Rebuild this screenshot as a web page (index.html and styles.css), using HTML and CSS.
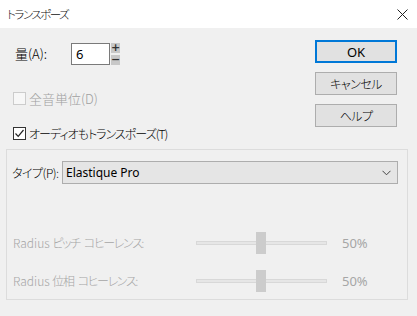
FILE: index.html
```html
<!DOCTYPE html>
<html lang="ja">
<head>
  <meta charset="UTF-8">
  <title>トランスポーズ</title>
  <link rel="stylesheet" href="styles.css">
</head>
<body>
  <div class="titlebar">
    <span class="titulo">トランスポーズ</span>
    <svg class="cerrar" width="11" height="11" viewBox="0 0 11 11">
      <path d="M0.5 0.5 L10.5 10.5 M10.5 0.5 L0.5 10.5" stroke="#222" stroke-width="1"/>
    </svg>
  </div>

  <div class="superior">
    <div class="izquierda">
      <div class="fila-cantidad">
        <span class="etiqueta-cantidad">量(A):</span>
        <div class="entrada">6</div>
        <div class="spinner">
          <span class="spin-btn">+</span>
          <span class="spin-btn">−</span>
        </div>
      </div>
      <div class="check deshabilitado">
        <span class="caja"></span>
        <span>全音単位(D)</span>
      </div>
      <div class="check segundo">
        <span class="caja marcada">
          <svg width="11" height="11" viewBox="0 0 11 11">
            <path d="M1.5 5.5 L4.2 8.3 L9.5 2" fill="none" stroke="#222" stroke-width="1.2"/>
          </svg>
        </span>
        <span class="texto-apretado">オーディオもトランスポーズ(T)</span>
      </div>
    </div>
    <div class="botones">
      <div class="boton principal">OK</div>
      <div class="boton">キャンセル</div>
      <div class="boton">ヘルプ</div>
    </div>
  </div>

  <div class="grupo">
    <div class="fila-tipo">
      <span class="etiqueta-tipo">タイプ(P):</span>
      <div class="selector">
        <span>Elastique Pro</span>
        <svg width="9" height="6" viewBox="0 0 9 6">
          <path d="M0.5 0.8 L4.5 4.8 L8.5 0.8" fill="none" stroke="#444" stroke-width="1"/>
        </svg>
      </div>
    </div>

    <div class="fila-slider primero">
      <span class="etiqueta-slider">Radius <span class="kana">ピッチ コヒーレンス:</span></span>
      <div class="slider">
        <div class="pista"></div>
        <div class="pulgar"></div>
      </div>
      <span class="valor">50%</span>
    </div>
    <div class="fila-slider">
      <span class="etiqueta-slider">Radius <span class="kana">位相 コヒーレンス:</span></span>
      <div class="slider">
        <div class="pista"></div>
        <div class="pulgar"></div>
      </div>
      <span class="valor">50%</span>
    </div>
  </div>
</body>
</html>
```

FILE: styles.css
```css
body {
  margin: 0;
  padding: 0;
  width: 417px;
  height: 316px;
  overflow: hidden;
  background-color: #f0f0f0;
  font-family: "Noto Sans CJK JP", "Noto Sans", sans-serif;
  font-feature-settings: "palt";
  font-weight: 300;
  font-size: 12px;
  line-height: 14px;
  color: #000;
  white-space: nowrap;
}

.titlebar {
  height: 28px;
  background: #fff;
  display: flex;
  align-items: center;
  justify-content: space-between;
  padding: 0 8px 0 7px;
}

.titulo {
  font-size: 11.5px;
  letter-spacing: -1.5px;
  color: #111;
}

.cerrar {
  margin-right: 1px;
}

.superior {
  display: flex;
  height: 121px;
  padding-top: 12px;
  box-sizing: border-box;
}

.izquierda {
  flex: 1;
  padding-left: 13px;
}

.fila-cantidad {
  display: flex;
  align-items: center;
  margin-top: 3px;
  height: 22px;
}

.etiqueta-cantidad {
  width: 56px;
  margin-left: 2px;
  font-size: 13px;
}

.entrada {
  width: 39px;
  height: 22px;
  box-sizing: border-box;
  border: 1px solid #7a7a7a;
  background: #fff;
  padding: 3px 0 0 4px;
  font-family: "Noto Sans", sans-serif;
  font-weight: 400;
  font-size: 13px;
  line-height: 15px;
}

.spinner {
  display: flex;
  flex-direction: column;
  gap: 2px;
  margin-left: 1px;
}

.spin-btn {
  width: 9px;
  height: 10px;
  background: #c8c8c8;
  color: #333;
  font-family: "DejaVu Sans", sans-serif;
  font-size: 11px;
  font-weight: bold;
  line-height: 10px;
  text-align: center;
}

.check {
  display: flex;
  align-items: center;
  gap: 3px;
  height: 13px;
  margin-top: 27px;
  font-size: 13px;
}

.check.segundo {
  margin-top: 22px;
}

.texto-apretado {
  font-size: 12px;
  letter-spacing: -1px;
}

.caja {
  width: 13px;
  height: 13px;
  flex-shrink: 0;
  box-sizing: border-box;
  border: 1px solid #333;
  background: #fff;
  display: flex;
  align-items: center;
  justify-content: center;
}

.deshabilitado {
  color: #a0a0a0;
}

.deshabilitado .caja {
  border-color: #cccccc;
  background: #f7f7f7;
}

.botones {
  width: 82px;
  margin-right: 20px;
  display: flex;
  flex-direction: column;
  gap: 9px;
}

.boton {
  height: 23px;
  box-sizing: border-box;
  border: 1px solid #adadad;
  background: #e1e1e1;
  display: flex;
  align-items: center;
  justify-content: center;
  font-size: 12px;
  letter-spacing: -0.5px;
}

.boton.principal {
  border: 2px solid #0078d7;
  font-family: "Noto Sans", sans-serif;
  font-weight: 400;
  font-size: 13px;
  letter-spacing: 0;
}

.grupo {
  margin: 0 9px 0 6px;
  height: 151px;
  box-sizing: border-box;
  border: 1px solid #dcdcdc;
  padding: 11px 9px 0 5px;
}

.fila-tipo {
  display: flex;
  align-items: center;
}

.etiqueta-tipo {
  width: 50px;
  flex-shrink: 0;
  font-size: 12px;
  letter-spacing: -0.5px;
}

.selector {
  flex: 1;
  height: 23px;
  box-sizing: border-box;
  border: 1px solid #adadad;
  background: #e5e5e5;
  display: flex;
  align-items: center;
  justify-content: space-between;
  padding: 0 6px 0 3px;
  font-family: "Noto Sans", sans-serif;
  font-weight: 400;
  font-size: 12px;
}

.fila-slider {
  display: flex;
  align-items: center;
  height: 22px;
  margin-top: 16px;
  color: #a6a6a6;
}

.fila-slider.primero {
  margin-top: 48px;
}

.etiqueta-slider {
  width: 183px;
  flex-shrink: 0;
  margin-left: 1px;
  font-size: 12px;
}

.kana {
  letter-spacing: -1.4px;
  word-spacing: 3px;
}

.slider {
  position: relative;
  width: 131px;
  height: 22px;
}

.pista {
  position: absolute;
  left: 0;
  right: 0;
  top: 9px;
  height: 4px;
  box-sizing: border-box;
  border: 1px solid #d8d8d8;
  background: #e6e6e6;
}

.pulgar {
  position: absolute;
  left: 60px;
  top: 0;
  width: 10px;
  height: 22px;
  background: #cccccc;
}

.valor {
  margin-left: 15px;
  font-family: "Noto Sans", sans-serif;
  font-weight: 400;
  font-size: 13px;
}
```
